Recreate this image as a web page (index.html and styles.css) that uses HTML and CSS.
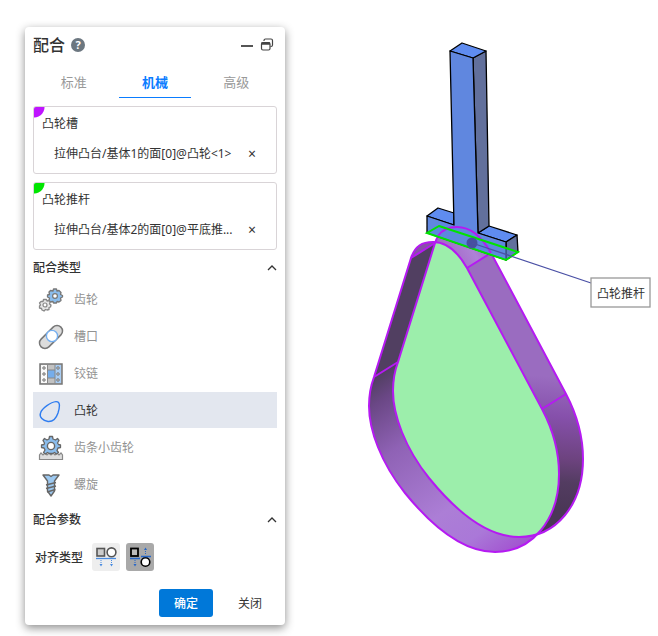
FILE: index.html
```html
<!DOCTYPE html>
<html lang="zh-CN">
<head>
  <meta charset="UTF-8">
  <title>配合</title>
  <link rel="stylesheet" href="styles.css">
</head>
<body>
  <div class="panel">
    <div class="header">
      <h1>配合</h1>
      <button class="help" aria-label="帮助">?</button>
      <button class="min" aria-label="最小化">
        <svg width="14" height="14" viewBox="0 0 14 14"><path d="M1 8H13" stroke="#555" stroke-width="2"/></svg>
      </button>
      <button aria-label="还原">
        <svg width="14" height="14" viewBox="0 0 14 14" fill="none" stroke="#444" stroke-width="1.2">
          <path d="M4 3V2.5Q4 1 5.5 1H11Q12.5 1 12.5 2.5V7Q12.5 8.5 11 8.5H10.5"/>
          <rect x="1.5" y="4.5" width="8.500" height="7.500" rx="1.5"/>
          <path d="M1.500 5.500H10" stroke-width="2.5"/>
        </svg>
      </button>
    </div>

    <div class="tabs">
      <button class="tab">标准</button>
      <button class="tab on">机械</button>
      <button class="tab">高级</button>
    </div>

    <div class="pick pick-slot">
      <div class="pick-name">凸轮槽</div>
      <div class="pick-item"><span>拉伸凸台/基体1的面[0]@凸轮&lt;1&gt;</span><button class="remove" aria-label="移除">×</button></div>
    </div>
    <div class="pick pick-rod">
      <div class="pick-name">凸轮推杆</div>
      <div class="pick-item"><span>拉伸凸台/基体2的面[0]@平底推...</span><button class="remove" aria-label="移除">×</button></div>
    </div>

    <div class="section">
      <h2>配合类型</h2>
      <svg width="10" height="8" viewBox="0 0 10 8"><path d="M1 6L5 2L9 6" fill="none" stroke="#333" stroke-width="1.3"/></svg>
    </div>
    <div class="types">
      <button class="type">
        <svg width="26" height="26" viewBox="0 0 26 26">
          <path d="M15.500 2H18.500L19 4L21 3.500L23 5.500L22.500 7.500L24.500 8.500V10L22.500 11L23 13.500L21 15L19 14.500L18.500 16H15.500L15 14.500L12.500 15L11 13.500L11.500 11L9.500 10V8L11.500 7.500L11 5L12.500 3.500L15 4Z" fill="#8bbdec" stroke="#777" stroke-width="1.3" stroke-linejoin="round"/>
          <circle cx="17" cy="9" r="2.4" fill="#fff" stroke="#777" stroke-width="1.2"/>
          <path d="M5.500 12.500H8.500L9 14L11 13.500L12 15.500L11.500 17L13 18L12.500 20L11 20.500L11 22.500L9 23L7.500 22.500L6 24L4 23L3.500 21.500L1.500 21L1.500 19L2.500 18L1.500 16L3 14.500L5 14.500Z" fill="#e6e6e6" stroke="#888" stroke-width="1.3" stroke-linejoin="round"/>
          <circle cx="7" cy="18" r="2" fill="#fff" stroke="#888" stroke-width="1.2"/>
        </svg>
        齿轮
      </button>
      <button class="type">
        <svg width="26" height="26" viewBox="0 0 26 26">
          <rect x="-1" y="7.500" width="28" height="11" rx="5.500" transform="rotate(-45 13 13)" fill="#dcdcdc" stroke="#777" stroke-width="1.5"/>
          <circle cx="14" cy="12" r="5.600" fill="#fff" stroke="#75aff0" stroke-width="1.4"/>
        </svg>
        槽口
      </button>
      <button class="type">
        <svg width="26" height="26" viewBox="0 0 26 26">
          <rect x="2" y="3" width="22" height="20" fill="#c2c2c2" stroke="#777" stroke-width="1.5"/>
          <path d="M3 4H9V22H3Z" fill="#fafafa"/>
          <path d="M10 9H17V17H10Z" fill="#75adeb"/>
          <path d="M17 4H23V22H17Z" fill="#a9cdf3"/>
          <path d="M9.500 3V23M17 3V23M9.500 9H17M9.500 17H17" stroke="#888"/>
          <g fill="#fff" stroke="#666">
            <circle cx="6" cy="7" r="1.2"/><circle cx="6" cy="13" r="1.2"/><circle cx="6" cy="19" r="1.2"/>
            <circle cx="20" cy="7" r="1.2"/><circle cx="20" cy="13" r="1.2"/><circle cx="20" cy="19" r="1.2"/>
          </g>
        </svg>
        铰链
      </button>
      <button class="type on">
        <svg width="26" height="26" viewBox="0 0 26 26">
          <path d="M2.500 15C4 10 13 4 18 3.600C23 3.500 21.500 10 20 15C18 21 14 23.800 10 23.500C5 23 1 19 2.500 15Z" fill="none" stroke="#2f7df0" stroke-width="1.4"/>
        </svg>
        凸轮
      </button>
      <button class="type">
        <svg width="26" height="26" viewBox="0 0 26 26">
          <path d="M1.500 24.500V20L3 18L5 20L7 18L9 20L11 18L13 20L15 18L17 20L19 18L21 20L23 18L24.500 20V24.500Z" fill="#ddd" stroke="#888" stroke-width="1.2"/>
          <path d="M11.500 1.500H14.500L15 4L17.500 5L19.500 3.500L21 5.500L19.500 8L20.500 9.500L22.500 10V12.500L20 13L19 15.500L20.500 17.500L18.500 19L16.500 17.500L14.500 18.500H11.500L9.500 17.500L7.500 19L5.500 17.500L7 15L6 13L3.500 12.500V10L6 9.500L6.500 8L5 5.500L6.500 3.500L9 5L11 4Z" fill="#8bbdec" stroke="#666" stroke-width="1.3" stroke-linejoin="round"/>
          <circle cx="13" cy="11" r="3.600" fill="#fff" stroke="#666" stroke-width="1.4"/>
        </svg>
        齿条小齿轮
      </button>
      <button class="type">
        <svg width="26" height="26" viewBox="0 0 26 26">
          <path d="M5 3H11L13 4.500L15 3H21L16.500 9V19L13 24L9.500 19V9Z" fill="#9cc8f0" stroke="#666" stroke-width="1.4" stroke-linejoin="round"/>
          <path d="M8 13L18 10.500M8 16.500L18 14M9 20L17.500 17.500" stroke="#666" stroke-width="1.500"/>
        </svg>
        螺旋
      </button>
    </div>

    <div class="section">
      <h2>配合参数</h2>
      <svg width="10" height="8" viewBox="0 0 10 8"><path d="M1 6L5 2L9 6" fill="none" stroke="#333" stroke-width="1.3"/></svg>
    </div>
    <div class="align">
      <span class="align-name">对齐类型</span>
      <button class="align-btn" aria-label="同向对齐">
        <svg width="28" height="28" viewBox="0 0 28 28">
          <rect x="5" y="5.500" width="7.500" height="7.500" fill="#ccc" stroke="#555" stroke-width="1.6"/>
          <circle cx="19.500" cy="9.300" r="4.400" fill="#fff" stroke="#555" stroke-width="1.6"/>
          <path d="M4 15.500H24" stroke="#4a8be0" stroke-width="1.3"/>
          <path d="M9 17V20M19.500 17V20" stroke="#4a8be0" stroke-dasharray="1 1"/>
          <path d="M7.500 21H10.500L9 23.500ZM18 21H21L19.500 23.500Z" fill="#4a8be0"/>
        </svg>
      </button>
      <button class="align-btn on" aria-label="反向对齐">
        <svg width="28" height="28" viewBox="0 0 28 28">
          <rect x="5" y="5.500" width="7" height="7.500" fill="#bbb" stroke="#000" stroke-width="1.8"/>
          <circle cx="19.500" cy="19" r="4.300" fill="#fff" stroke="#000" stroke-width="1.6"/>
          <path d="M4 15.500H14M15 13.500H25" stroke="#2767c8" stroke-width="1.3"/>
          <path d="M9 17V20M19.500 8V12" stroke="#2767c8" stroke-dasharray="1 1"/>
          <path d="M7.500 21H10.500L9 23.500ZM18 7H21L19.500 4.500Z" fill="#2767c8"/>
        </svg>
      </button>
    </div>

    <div class="footer">
      <button class="btn ok">确定</button>
      <button class="btn">关闭</button>
    </div>
  </div>

  <div class="scene">
    <svg viewBox="285 0 373 636" role="img" aria-label="凸轮与推杆模型">
      <defs>
        <linearGradient id="left" gradientUnits="userSpaceOnUse" x1="375" y1="377" x2="500" y2="560">
          <stop offset="0" stop-color="#513f61"/>
          <stop offset=".1" stop-color="#6a4785"/>
          <stop offset=".32" stop-color="#8f62b5"/>
          <stop offset=".68" stop-color="#ac7ed6"/>
          <stop offset=".85" stop-color="#aa78d8"/>
          <stop offset="1" stop-color="#a254d0"/>
        </linearGradient>
        <linearGradient id="right" gradientUnits="userSpaceOnUse" x1="570" y1="395" x2="560" y2="525">
          <stop offset="0" stop-color="#9a6cc0"/>
          <stop offset=".3" stop-color="#8650ab"/>
          <stop offset=".62" stop-color="#6d437f"/>
          <stop offset=".8" stop-color="#533c61"/>
          <stop offset="1" stop-color="#4b3757"/>
        </linearGradient>
        <linearGradient id="tip" gradientUnits="userSpaceOnUse" x1="450" y1="260" x2="485" y2="240">
          <stop offset="0" stop-color="#a468c8"/>
          <stop offset=".6" stop-color="#ae82d6"/>
          <stop offset="1" stop-color="#9c6dc2"/>
        </linearGradient>
        <path id="cam" d="M374 377L411 258C415 246 422 242 433 242C447 242 458 252 467 268L542 409C552 428 559 450 559 474C559 520 532 552 495 552C465 552 435 530 405 493C381 463 369 430 369 406C369 394 371 385 374 377Z"/>
        <clipPath id="front"><use href="#cam"/></clipPath>
      </defs>

      <!-- cam -->
      <use href="#cam" transform="translate(24 -15)" fill="url(#right)"/>
      <path d="M435 243C439 231 446 227 457 227C471 227 482 237 491 253L467 268C458 252 447 242 435 242Z" fill="url(#tip)"/>
      <use href="#cam" fill="url(#left)"/>
      <path d="M411 258C415 246 422 242 433 242L435 243Z" fill="#8850a8"/>
      <g clip-path="url(#front)">
        <use href="#cam" transform="translate(24 -15)" fill="#9ceeab"/>
      </g>
      <g class="cam-edge">
        <use href="#cam"/>
        <use href="#cam" transform="translate(24 -15)"/>
        <path d="M411 258L435 243M467 268L491 253M374 377L398 362M542 409L566 394"/>
      </g>

      <!-- follower -->
      <g class="rod">
        <path d="M427 216L438 208L454 213V225Z" fill="#5f8cf0"/>
        <path d="M478 233L489 226L517 235L506 242Z" fill="#5f8cf0"/>
        <path d="M506 242L517 235L518 252L506 260Z" fill="#62709c"/>
        <path d="M473 58L486 51L489 226L478 233Z" fill="#62709c"/>
        <path d="M450 51L462 43L486 51L473 58Z" fill="#5f8cf0"/>
        <path d="M450 51L473 58L478 233L506 242V260L427 233V216L454 225Z" fill="#6087df"/>
      </g>
      <path d="M439 226L518 252L506 260L427 233Z" fill="#5b89dd" fill-opacity=".6"/>
      <path class="cam-edge" d="M438 236C442 230 448 227 457 227C471 227 482 237 491 253"/>
      <path d="M439 226L518 252L506 260L427 233Z" fill="none" stroke="#00e400" stroke-width="2"/>

      <!-- callout -->
      <circle cx="472" cy="243" r="5.500" fill="#4750a0"/>
      <path d="M472 243L591 283" stroke="#4a50a5" stroke-width="1.3"/>
      <rect x="591" y="278" width="59" height="29" fill="#fff" stroke="#999" stroke-width="1.3"/>
      <text x="597" y="298" class="callout">凸轮推杆</text>
    </svg>
  </div>
</body>
</html>
```

FILE: styles.css
```css
* {
  margin: 0;
  padding: 0;
  box-sizing: border-box;
}
body {
  display: flex;
  align-items: flex-start;
  background: #fff;
  color: #333;
  font-family: "Noto Sans", "Noto Sans CJK SC", sans-serif;
  font-size: 12px;
  line-height: 18px;
}
button {
  border: 0;
  background: none;
  color: inherit;
  font: inherit;
  cursor: pointer;
}
svg {
  display: block;
}
.panel {
  flex: none;
  width: 260px;
  margin: 27px 0 11px 25px;
  padding: 0 8px 8px;
  border-radius: 4px;
  background: #fff;
  box-shadow: 0 3px 10px rgba(0,0,0,0.45);
}
.header {
  display: flex;
  align-items: center;
  gap: 6px;
  height: 36px;
  padding-right: 3px;
}
.header h1 {
  font-size: 16px;
  font-weight: 500;
  line-height: 24px;
}
.help {
  width: 14px;
  height: 14px;
  border-radius: 50%;
  background: #6c7780;
  color: #fff;
  font-size: 11px;
  font-weight: 700;
  line-height: 14px;
}
.min {
  margin-left: auto;
}
.tabs {
  display: flex;
  height: 35px;
  margin-bottom: 8px;
}
.tab {
  flex: 1;
  margin: 0 5px;
  padding-top: 4px;
  border-bottom: 1px solid transparent;
  color: #999;
  font-size: 13px;
}
.tab.on {
  border-color: #0a7cff;
  color: #0a7cff;
  font-weight: 700;
}
.pick {
  height: 68px;
  padding: 8px;
  border: 1px solid #d9d4d7;
  border-radius: 3px;
  background-repeat: no-repeat;
}
.pick + .pick {
  margin-top: 8px;
}
.pick-slot {
  background-image: radial-gradient(circle at 0 0, #bf14ff 10px, transparent 11px);
}
.pick-rod {
  background-image: radial-gradient(circle at 0 0, #00e600 10px, transparent 11px);
}
.pick-item {
  display: flex;
  justify-content: space-between;
  margin-top: 12px;
  padding: 0 12px;
  white-space: nowrap;
}
.remove {
  width: 8px;
  font-size: 14px;
}
.section {
  display: flex;
  align-items: center;
  justify-content: space-between;
  height: 31px;
  padding-top: 5px;
}
.section h2 {
  font-size: 12px;
  font-weight: 500;
}
.types {
  display: grid;
  gap: 1px;
}
.type {
  display: flex;
  align-items: center;
  gap: 10px;
  height: 36px;
  padding: 2px 0 0 5px;
  color: #929292;
}
.type.on {
  background: #e3e7ef;
  color: #333;
}
.align {
  display: flex;
  align-items: center;
  gap: 6px;
  padding: 10px 2px 0;
}
.align-name {
  margin-right: 3px;
  padding-top: 2px;
  font-weight: 500;
}
.align-btn {
  width: 28px;
  height: 28px;
  border-radius: 3px;
  background: #eee;
}
.align-btn.on {
  background: #a9a9a9;
}
.footer {
  display: flex;
  justify-content: flex-end;
  gap: 10px;
  margin-top: 18px;
}
.btn {
  width: 54px;
  height: 28px;
  padding-top: 2px;
  border-radius: 3px;
}
.btn.ok {
  background: #0078d9;
  color: #fff;
  font-weight: 500;
}
.scene {
  flex: 1;
  min-width: 0;
}
.scene svg {
  width: 100%;
}
.cam-edge {
  fill: none;
  stroke: #b51af2;
  stroke-width: 2px;
}
.rod path {
  stroke: #000;
  stroke-width: 1.3px;
  stroke-linejoin: round;
}
.callout {
  fill: #333;
  font-size: 12px;
}
```
